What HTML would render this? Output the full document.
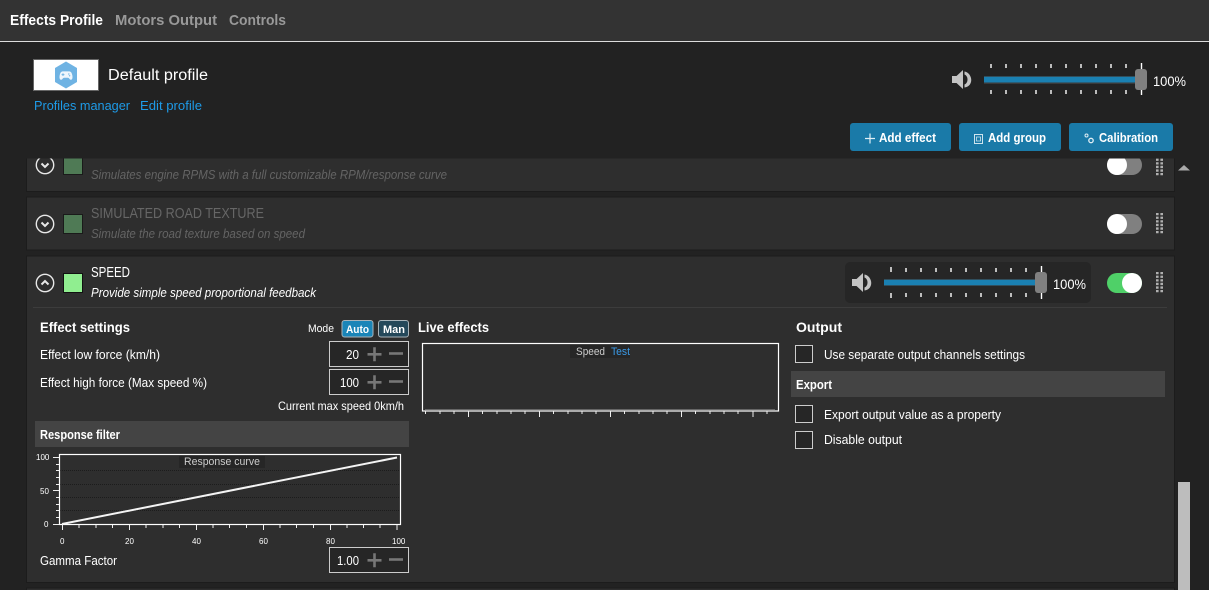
<!DOCTYPE html>
<html><head><meta charset="utf-8"><style>
html,body{margin:0;padding:0;background:#222;width:1209px;height:590px;overflow:hidden}
svg{display:block}
text{font-family:"Liberation Sans",sans-serif;fill:#fff;font-size:12.5px}
.b{font-weight:bold}
.i{font-style:italic}
</style></head><body>
<svg xmlns="http://www.w3.org/2000/svg" width="1209" height="590" viewBox="0 0 1209 590">
<defs>
<g id="spk"><path d="M0 6.500H4.500L11 .5V19.500L4.500 13.500H0Z" fill="#c4c4c4"/><path d="M12.500 2C20.500 3.500 22.500 16.500 12.500 18L12.500 15C16.500 13.500 16.500 6.500 12.500 5Z" fill="#c4c4c4"/></g>
<g id="drag" fill="none" stroke="#b0b0b0" stroke-width="2.600"><path d="M1.300 0V21M5.700 0V21" stroke-dasharray="2.300 1.300"/></g>
<path id="plus" d="M-7 0H7M0 -7V7" fill="none" stroke="#777" stroke-width="2.600"/>
<path id="minus" d="M-7 0H7" fill="none" stroke="#777" stroke-width="2.600"/>
</defs>

<rect width="1209" height="590" fill="#222"/>
<rect width="1209" height="41" fill="#333"/>
<rect y="41" width="1209" height="1" fill="#ddd"/>
<text x="10" y="25" class="b" style="font-size:15px" textLength="93" lengthAdjust="spacingAndGlyphs">Effects Profile</text>
<text x="115" y="25" class="b" style="font-size:15px;fill:#999" textLength="102" lengthAdjust="spacingAndGlyphs">Motors Output</text>
<text x="229" y="25" class="b" style="font-size:15px;fill:#999" textLength="57" lengthAdjust="spacingAndGlyphs">Controls</text>

<rect x="33.500" y="59.500" width="65" height="31" fill="#fff" stroke="#666"/>
<path d="M66 61.500L77 68V82L66 88.500L55 82V68Z" fill="#6fb3e3"/>
<g transform="translate(66 75) scale(.8) translate(-66 -75)">
<path d="M62 70.500H70C72.500 70.500 73.500 73 74 76C74.500 79.500 73.500 81 72 81C70.500 81 70 78.500 68.500 78.500H63.500C62 78.500 61.500 81 60 81C58.500 81 57.500 79.500 58 76C58.500 73 59.500 70.500 62 70.500Z" fill="#eef6fc"/>
<path d="M60.500 74.500H64M62.250 72.800V76.200" stroke="#6fb3e3" stroke-width="1.200"/><circle cx="69.500" cy="73.800" r=".9" fill="#6fb3e3"/><circle cx="70.500" cy="76" r=".9" fill="#6fb3e3"/>
</g>
<text x="108" y="80" style="font-size:15.500px" textLength="100" lengthAdjust="spacingAndGlyphs">Default profile</text>
<text x="34" y="110" style="font-size:13px;fill:#1e9be8" textLength="96" lengthAdjust="spacingAndGlyphs">Profiles manager</text>
<text x="140" y="110" style="font-size:13px;fill:#1e9be8" textLength="62" lengthAdjust="spacingAndGlyphs">Edit profile</text>

<use href="#spk" x="952" y="69.500"/>
<path d="M991 64v4M1006 64v4M1021 64v4M1036 64v4M1051 64v4M1066 64v4M1081 64v4M1096 64v4M1111 64v4M1126 64v4M1141.500 63v6M991 90v4M1006 90v4M1021 90v4M1036 90v4M1051 90v4M1066 90v4M1081 90v4M1096 90v4M1111 90v4M1126 90v4M1141.500 90v5" stroke="#fff" stroke-width="1.400"/>
<rect x="984" y="76" width="152" height="8" fill="#3a3a3a"/>
<rect x="984" y="76.700" width="152" height="5.800" fill="#1a80b2"/>
<rect x="1135" y="69" width="12" height="21" rx="3" fill="#808080"/>
<text x="1153" y="86" style="font-size:14px" textLength="33" lengthAdjust="spacingAndGlyphs">100%</text>

<rect x="850" y="123" width="101" height="28" rx="3" fill="#1a7aa8"/>
<rect x="959" y="123" width="102" height="28" rx="3" fill="#1a7aa8"/>
<rect x="1069" y="123" width="104" height="28" rx="3" fill="#1a7aa8"/>
<path d="M865 138.500H875M870 133.500V143.500" stroke="#dfeef5" stroke-width="1.200" fill="none"/>
<text x="879" y="142" class="b" textLength="57" lengthAdjust="spacingAndGlyphs">Add effect</text>
<rect x="974.500" y="134.500" width="8" height="9" fill="none" stroke="#cfe4ee"/><path d="M976.500 137H980.500V141H976.500Z" fill="none" stroke="#cfe4ee" stroke-width=".8"/>
<text x="988" y="142" class="b" textLength="58" lengthAdjust="spacingAndGlyphs">Add group</text>
<circle cx="1086.500" cy="135.500" r="1.500" fill="none" stroke="#dfeef5"/><circle cx="1091" cy="140.500" r="2.200" fill="none" stroke="#dfeef5" stroke-width="1.300"/>
<text x="1099" y="142" class="b" textLength="59" lengthAdjust="spacingAndGlyphs">Calibration</text>

<!-- panels -->
<rect x="26.500" y="158" width="1148" height="33.500" fill="#2e2e2e" stroke="#1c1c1c"/>
<rect x="26.500" y="197" width="1148" height="53" fill="#2e2e2e" stroke="#1c1c1c"/>
<rect x="26.500" y="256" width="1148" height="326.500" fill="#2e2e2e" stroke="#1c1c1c"/>
<rect x="26.500" y="588" width="1148" height="8" fill="#2e2e2e" stroke="#1c1c1c"/>

<g fill="none" stroke="#e8e8e8">
<circle cx="45" cy="165" r="8.700" stroke-width="1.400"/><path d="M41.500 163.500L45 167L48.500 163.500" stroke-width="2"/>
<circle cx="45" cy="224" r="8.700" stroke-width="1.400"/><path d="M41.500 222.500L45 226L48.500 222.500" stroke-width="2"/>
<circle cx="45" cy="283" r="8.700" stroke-width="1.400"/><path d="M41.500 284.500L45 281L48.500 284.500" stroke-width="2"/>
</g>
<rect x="63.500" y="158" width="19" height="16.500" fill="#4f7a55" stroke="#1a1a1a"/>
<rect x="63.500" y="214.500" width="19" height="19" fill="#4f7a55" stroke="#1a1a1a"/>
<rect x="63.500" y="273.500" width="19" height="19" fill="#90ee90" stroke="#111"/>

<text x="91" y="179" class="i" style="fill:#646464" textLength="356" lengthAdjust="spacingAndGlyphs">Simulates engine RPMS with a full customizable RPM/response curve</text>
<text x="91" y="218" style="font-size:14.500px;fill:#666" textLength="173" lengthAdjust="spacingAndGlyphs">SIMULATED ROAD TEXTURE</text>
<text x="91" y="238" class="i" style="fill:#646464" textLength="214" lengthAdjust="spacingAndGlyphs">Simulate the road texture based on speed</text>
<text x="91" y="277" style="font-size:14.500px" textLength="39" lengthAdjust="spacingAndGlyphs">SPEED</text>
<text x="91" y="297" class="i" textLength="225" lengthAdjust="spacingAndGlyphs">Provide simple speed proportional feedback</text>

<!-- toggles -->
<rect x="1107" y="155" width="35" height="20" rx="10" fill="#808080"/><circle cx="1117" cy="165" r="10" fill="#fff"/>
<rect x="1107" y="214" width="35" height="20" rx="10" fill="#808080"/><circle cx="1117" cy="224" r="10" fill="#fff"/>
<rect x="1107" y="273" width="35" height="20" rx="10" fill="#4fd068"/><circle cx="1132" cy="283" r="10" fill="#fff"/>
<use href="#drag" x="1156" y="155"/><use href="#drag" x="1156" y="213"/><use href="#drag" x="1156" y="272"/>

<!-- clip of scrolled content above the list -->
<rect x="26" y="151" width="1150" height="7.500" fill="#222"/>

<!-- panel volume -->
<rect x="845" y="262" width="246" height="41" rx="5" fill="#262626"/>
<use href="#spk" x="852" y="272.500"/>
<path d="M891 267v5M906 268v4M921 268v4M936 268v4M951 268v4M966 268v4M981 268v4M996 268v4M1011 268v4M1026 268v4M1041.500 266v6M891 293v5M906 293v4M921 293v4M936 293v4M951 293v4M966 293v4M981 293v4M996 293v4M1011 293v4M1026 293v4M1041.500 293v6" stroke="#fff" stroke-width="1.400"/>
<rect x="884" y="279" width="152" height="7" fill="#3a3a3a"/>
<rect x="884" y="279.700" width="152" height="5.600" fill="#1a80b2"/>
<rect x="1035" y="272" width="12" height="21" rx="3" fill="#808080"/>
<text x="1053" y="289" style="font-size:14px" textLength="33" lengthAdjust="spacingAndGlyphs">100%</text>
<rect x="33" y="307" width="1134" height="1" fill="#3c3c3c"/>

<!-- effect settings -->
<text x="40" y="332" class="b" style="font-size:14px" textLength="90" lengthAdjust="spacingAndGlyphs">Effect settings</text>
<text x="308" y="332" style="font-size:11px" textLength="26" lengthAdjust="spacingAndGlyphs">Mode</text>
<rect x="342" y="320.500" width="31" height="16.500" rx="2.500" fill="#1a85b8" stroke="#a9b4ba"/>
<text x="346" y="333" class="b" style="font-size:11px" textLength="23" lengthAdjust="spacingAndGlyphs">Auto</text>
<rect x="378.500" y="320.500" width="30" height="16.500" rx="2.500" fill="#24485a" stroke="#a9b4ba"/>
<text x="383" y="333" class="b" style="font-size:11px" textLength="22" lengthAdjust="spacingAndGlyphs">Man</text>

<text x="40" y="359" textLength="120" lengthAdjust="spacingAndGlyphs">Effect low force (km/h)</text>
<rect x="329.500" y="341.500" width="79" height="25" fill="#262626" stroke="#ccc"/>
<text x="346" y="359" style="font-size:13px" textLength="13" lengthAdjust="spacingAndGlyphs">20</text>
<use href="#plus" x="374.500" y="354.300"/><use href="#minus" x="396" y="353.500"/>

<text x="40" y="387" textLength="167" lengthAdjust="spacingAndGlyphs">Effect high force (Max speed %)</text>
<rect x="329.500" y="369.500" width="79" height="25" fill="#262626" stroke="#ccc"/>
<text x="340" y="387" style="font-size:13px" textLength="19" lengthAdjust="spacingAndGlyphs">100</text>
<use href="#plus" x="374.500" y="382.300"/><use href="#minus" x="396" y="381.500"/>

<text x="278" y="410" style="font-size:12px" textLength="126" lengthAdjust="spacingAndGlyphs">Current max speed 0km/h</text>

<rect x="35" y="421" width="374" height="26" fill="#444"/>
<text x="40" y="439" class="b" textLength="80" lengthAdjust="spacingAndGlyphs">Response filter</text>

<!-- response chart -->
<path d="M60 470.500H400M60 484.500H400M60 497.500H400M60 510.500H400" stroke="#1c1c1c" stroke-dasharray="1 1" fill="none"/>
<rect x="59.500" y="454.500" width="341" height="70" fill="none" stroke="#fff" stroke-width="1.200"/>
<path d="M62.500 525v5M129.500 525v5M196.500 525v5M263.500 525v5M330.500 525v5M397 525v5M79 525v3M96 525v3M112.500 525v3M146 525v3M163 525v3M179.500 525v3M213 525v3M229.500 525v3M246.500 525v3M280 525v3M296.500 525v3M313.500 525v3M347 525v3M363.500 525v3M380 525v3" stroke="#eee" fill="none"/>
<path d="M53 524.500h6M53 490.500h6M53 457.500h6M56 517.500h3M56 510.500h3M56 504.500h3M56 497.500h3M56 484.500h3M56 477.500h3M56 470.500h3M56 464.500h3" stroke="#eee" fill="none"/>
<path d="M62 524L397 457.500" stroke="#f4f4f4" stroke-width="2" fill="none"/>
<rect x="179" y="456" width="86" height="12" fill="#262626"/>
<text x="184" y="465" style="font-size:11px;fill:#ccc" textLength="76" lengthAdjust="spacingAndGlyphs">Response curve</text>
<text x="36" y="460" style="font-size:8px">100</text><text x="40" y="494" style="font-size:8px">50</text><text x="44" y="527" style="font-size:8px">0</text>
<text x="60" y="544" style="font-size:8px">0</text><text x="125" y="544" style="font-size:8px">20</text><text x="192" y="544" style="font-size:8px">40</text><text x="259" y="544" style="font-size:8px">60</text><text x="326" y="544" style="font-size:8px">80</text><text x="392" y="544" style="font-size:8px">100</text>
<text x="40" y="565" textLength="77" lengthAdjust="spacingAndGlyphs">Gamma Factor</text>
<rect x="329.500" y="547.500" width="79" height="25" fill="#262626" stroke="#ccc"/>
<text x="337" y="565" style="font-size:13px" textLength="22" lengthAdjust="spacingAndGlyphs">1.00</text>
<use href="#plus" x="374.500" y="560.300"/><use href="#minus" x="396" y="559.500"/>

<!-- live effects -->
<text x="418" y="332" class="b" style="font-size:14px" textLength="71" lengthAdjust="spacingAndGlyphs">Live effects</text>
<rect x="422.500" y="343.500" width="356" height="67.500" fill="none" stroke="#fff" stroke-width="1.200"/>
<rect x="425" y="409" width="350" height="1" fill="#666"/>
<path d="M425.500 411v3M440 411v3M454 411v3M468.500 411v6M482.500 411v3M497 411v3M511 411v3M525 411v3M539.500 411v6M553.500 411v3M568 411v3M582 411v3M596 411v3M610.500 411v6M624.500 411v3M639 411v3M653 411v3M667 411v3M681.500 411v6M695.500 411v3M710 411v3M724 411v3M738 411v3M753 411v6M767 411v3" stroke="#eee" fill="none"/>
<rect x="570" y="345" width="60" height="13" fill="#262626"/>
<text x="576" y="355" style="font-size:11px;fill:#ccc" textLength="29" lengthAdjust="spacingAndGlyphs">Speed</text>
<text x="611" y="355" style="font-size:11px;fill:#3b9be8" textLength="19" lengthAdjust="spacingAndGlyphs">Test</text>

<!-- output -->
<text x="796" y="332" class="b" style="font-size:14px" textLength="46" lengthAdjust="spacingAndGlyphs">Output</text>
<rect x="795.500" y="345.500" width="17" height="17" fill="#262626" stroke="#ccc"/>
<text x="824" y="359" textLength="201" lengthAdjust="spacingAndGlyphs">Use separate output channels settings</text>
<rect x="791" y="371" width="374" height="26" fill="#444"/>
<text x="796" y="389" class="b" textLength="36" lengthAdjust="spacingAndGlyphs">Export</text>
<rect x="795.500" y="405.500" width="17" height="17" fill="#262626" stroke="#ccc"/>
<text x="824" y="419" textLength="177" lengthAdjust="spacingAndGlyphs">Export output value as a property</text>
<rect x="795.500" y="431.500" width="17" height="17" fill="#262626" stroke="#ccc"/>
<text x="824" y="444" textLength="78" lengthAdjust="spacingAndGlyphs">Disable output</text>

<!-- scrollbar -->
<path d="M1178 170.500L1184 165L1190 170.500Z" fill="#aaa"/>
<rect x="1178" y="482" width="12" height="108" fill="#bdbdbd"/>
</svg>
</body></html>
